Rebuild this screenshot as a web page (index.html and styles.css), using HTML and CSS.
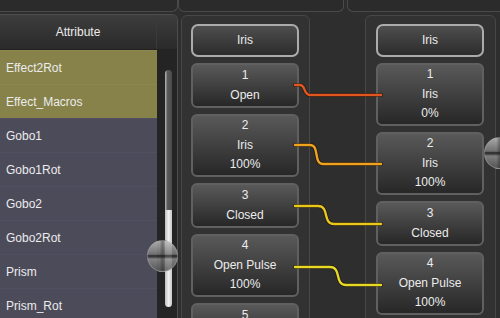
FILE: index.html
```html
<!DOCTYPE html>
<html lang="en">
<head>
    <meta charset="UTF-8">
    <title>Iris copy</title>
    <link rel="stylesheet" href="styles.css">
</head>
<body>
    <div class="screen">
        <div class="topbar">
            <div class="tb tb1"></div>
            <div class="tb tb2"></div>
            <div class="tb tb3"></div>
        </div>

        <div class="main">
            <!-- attribute list -->
            <div class="attr-panel">
                <div class="attr-head">
                    <div class="attr-title">Attribute</div>
                    <div class="attr-head-side"></div>
                </div>
                <div class="attr-body">
                    <ul class="attr-list">
                        <li class="sel">Effect2Rot</li>
                        <li class="sel">Effect_Macros</li>
                        <li>Gobo1</li>
                        <li>Gobo1Rot</li>
                        <li>Gobo2</li>
                        <li>Gobo2Rot</li>
                        <li>Prism</li>
                        <li>Prism_Rot</li>
                    </ul>
                    <div class="scroll">
                        <div class="rail">
                            <div class="rail-top"></div>
                            <div class="rail-bottom"></div>
                        </div>
                    </div>
                </div>
            </div>

            <!-- source palettes -->
            <div class="col col-src">
                <div class="hdr">Iris</div>
                <div class="cue"><span>1</span><span>Open</span></div>
                <div class="cue tall"><span>2</span><span>Iris</span><span>100%</span></div>
                <div class="cue"><span>3</span><span>Closed</span></div>
                <div class="cue tall"><span>4</span><span>Open Pulse</span><span>100%</span></div>
                <div class="cue"><span>5</span><span>&nbsp;</span></div>
            </div>

            <!-- destination palettes -->
            <div class="col col-dst">
                <div class="hdr">Iris</div>
                <div class="cue tall"><span>1</span><span>Iris</span><span>0%</span></div>
                <div class="cue tall"><span>2</span><span>Iris</span><span>100%</span></div>
                <div class="cue"><span>3</span><span>Closed</span></div>
                <div class="cue tall"><span>4</span><span>Open Pulse</span><span>100%</span></div>
            </div>
        </div>

        <!-- links between the two columns -->
        <svg class="links" width="500" height="318" viewBox="0 0 500 318">
            <g fill="none" stroke-linecap="round" stroke-linejoin="round">
                <path class="shadow" d="M295 85 H300 C306 85 303 95 310 95 H381"/>
                <path stroke="#e2561f" d="M295 85 H300 C306 85 303 95 310 95 H381"/>
                <path class="shadow" d="M295 145 H310 C320 145 313 164 323 164 H381"/>
                <path stroke="#f0a21e" d="M295 145 H310 C320 145 313 164 323 164 H381"/>
                <path class="shadow" d="M295 206 H318 C330 206 322 224 334 224 H381"/>
                <path stroke="#e9c81c" d="M295 206 H318 C330 206 322 224 334 224 H381"/>
                <path class="shadow" d="M295 267 H330 C342 267 334 285 346 285 H381"/>
                <path stroke="#e7da26" d="M295 267 H330 C342 267 334 285 346 285 H381"/>
            </g>
        </svg>

        <div class="knob knob-left"></div>
        <div class="knob knob-right"></div>
    </div>
</body>
</html>
```

FILE: styles.css
```css
* {
    margin: 0;
    padding: 0;
    box-sizing: border-box;
}

body {
    background-color: #2d2d2d;
    font-family: "Liberation Sans", Arial, sans-serif;
    font-size: 12px;
    color: #ececec;
}

.screen {
    width: 500px;
    height: 318px;
    position: relative;
    overflow: hidden;
    background-color: #2e2e2e;
}

/* top strip */
.topbar {
    height: 13px;
    display: flex;
}

.tb {
    height: 12px;
    border: 1px solid #4a4a4a;
    border-top: none;
    border-radius: 0 0 6px 6px;
    background-color: #2b2b2b;
}

.tb1 {
    width: 178px;
    border-left: none;
    border-radius: 0 0 6px 0;
}

.tb2 {
    width: 166px;
}

.tb3 {
    flex: 1;
    margin-left: 3px;
    border-right: none;
    border-radius: 0 0 0 6px;
}

.main {
    display: flex;
    align-items: flex-start;
}

/* attribute panel */
.attr-panel {
    width: 178px;
    height: 305px;
    margin-top: 1px;
    border-top: 1px solid #4d4d4d;
    border-right: 1px solid #4d4d4d;
    border-radius: 0 6px 0 0;
    overflow: hidden;
}

.attr-head {
    height: 35px;
    display: flex;
    background: linear-gradient(#3d3d3d, #2a2a2a);
    border-bottom: 1px solid #222;
}

.attr-title {
    width: 157px;
    line-height: 34px;
    text-align: center;
    border-right: 1px solid #3a3a3a;
}

.attr-head-side {
    flex: 1;
}

.attr-body {
    display: flex;
}

.attr-list {
    width: 157px;
    list-style: none;
}

.attr-list li {
    height: 34px;
    line-height: 34px;
    padding-left: 6px;
    background-color: #4c4b5a;
    border-top: 1px solid #514f60;
}

.attr-list li.sel {
    background-color: #86824a;
    border-top: 1px solid #8b874f;
}

.scroll {
    flex: 1;
    height: 270px;
    background-color: #242424;
    padding: 20px 0 0 8px;
}

.rail {
    width: 7px;
    height: 237px;
    display: flex;
    flex-direction: column;
}

.rail-top {
    height: 140px;
    border-radius: 4px 4px 0 0;
    background: linear-gradient(to right, #a8a8a8 0, #a8a8a8 1px, #5c5c5c 2px, #4a4a4a 100%);
}

.rail-bottom {
    flex: 1;
    border-radius: 0 0 4px 4px;
    background: linear-gradient(to right, #bdbdbd, #f0f0f0 50%, #c8c8c8);
}

/* palette columns */
.col {
    margin-top: 2px;
    height: 320px;
    border: 1px solid #474747;
    border-radius: 6px;
    background-color: #323232;
    padding-top: 8px;
}

.col-src {
    width: 129px;
    margin-left: 3px;
    padding-left: 9px;
}

.col-dst {
    width: 131px;
    margin-left: 55px;
    padding-left: 10px;
}

.hdr {
    width: 108px;
    height: 33px;
    margin-bottom: 6px;
    border: 2px solid #ababab;
    border-radius: 7px;
    background: linear-gradient(#4e4e4e, #2c2c2c);
    line-height: 29px;
    text-align: center;
}

.cue {
    width: 108px;
    height: 45px;
    margin-bottom: 6px;
    border: 2px solid #606060;
    border-radius: 6px;
    background: linear-gradient(#595959, #272727);
    display: flex;
    flex-direction: column;
    justify-content: center;
    align-items: center;
    line-height: 19.5px;
}

.cue.tall {
    height: 63px;
}

/* connection lines */
.links {
    position: absolute;
    left: 0;
    top: 0;
}

.links path {
    stroke-width: 2.4;
}

.links path.shadow {
    stroke: rgba(20, 10, 0, 0.55);
    stroke-width: 4;
}

/* fader knobs */
.knob {
    position: absolute;
    width: 31px;
    height: 32px;
    border-radius: 50%;
    border: 1px solid rgba(190, 190, 190, 0.45);
    background:
        linear-gradient(to right, rgba(0, 0, 0, 0) 40%, rgba(30, 30, 30, 0.35) 50%, rgba(0, 0, 0, 0) 60%),
        linear-gradient(#bdbdbd 0%, #7a7a7a 44%, #2a2a2a 49%, #3a3a3a 53%, #8c8c8c 60%, #5a5a5a 100%);
    opacity: 0.85;
}

.knob-left {
    left: 147px;
    top: 240px;
}

.knob-right {
    left: 484px;
    top: 137px;
}
```
